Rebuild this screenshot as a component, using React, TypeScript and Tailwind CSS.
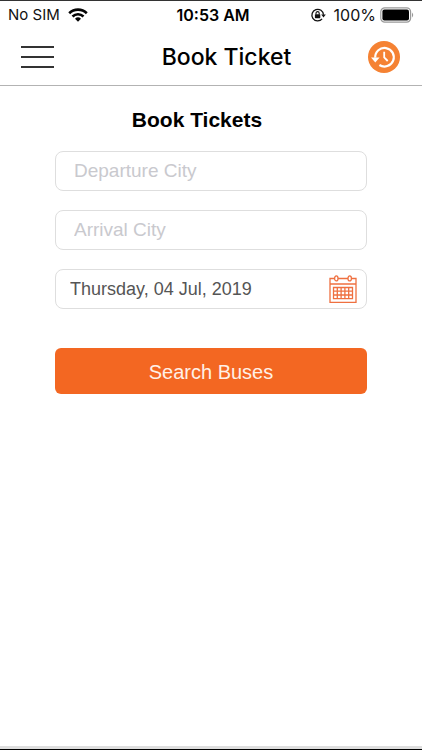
import { useState } from "react";

function StatusBar() {
  return (
    <div className="grid h-7 grid-cols-[1fr_auto_1fr] items-center pr-2 pl-2 font-['Inter',sans-serif] text-base leading-7 text-[#111]">
      <div className="flex items-center gap-2">
        <span className="text-[15px]">No SIM</span>
        <svg className="h-3.5 w-5" viewBox="0 0 20 14" fill="none" stroke="#050505" strokeWidth="2.6" role="img" aria-label="Wi-Fi">
          <path d="M1.2 5.2a12.6 12.6 0 0 1 17.6 0" />
          <path d="M4.5 8.5a8 8 0 0 1 11 0" />
          <path d="M7 10.7a4.3 4.3 0 0 1 6 0L10 13.8Z" fill="#050505" stroke="none" />
        </svg>
      </div>
      <time className="pl-1 font-semibold text-black">10:53 AM</time>
      <div className="flex items-center justify-end gap-1">
        <svg className="mr-1 h-4 w-4" viewBox="0 0 16 16" fill="none" stroke="#111" strokeWidth="1.3" role="img" aria-label="Rotation lock">
          <path d="M12.1 11.9A5.8 5.8 0 1 1 13.5 7.8" />
          <path d="M11.2 7.6h4.6l-2.3 2.8Z" fill="#111" stroke="none" />
          <rect x="4.9" y="7.2" width="5.4" height="4" rx=".6" fill="#111" stroke="none" />
          <path d="M6 7.5V6.2a1.6 1.6 0 0 1 3.2 0v1.3" strokeWidth="1.1" />
        </svg>
        <span>100%</span>
        <svg className="h-4 w-[34px]" viewBox="0 0 34 16" role="img" aria-label="Battery full">
          <rect x=".8" y=".8" width="29.8" height="14.4" rx="4" fill="#fff" stroke="#999" strokeWidth="1.2" />
          <rect x="2.4" y="2.5" width="26.6" height="11" rx="2" fill="#000" />
          <path d="M32 5.5q2.4 2.5 0 5Z" fill="#999" />
        </svg>
      </div>
    </div>
  );
}

function HistoryIcon() {
  return (
    <svg className="h-8 w-8" viewBox="0 0 32 32" fill="none" aria-hidden="true">
      <circle cx="16" cy="16" r="16" fill="#f58233" />
      <path d="M7.2 16.6A9.3 9.3 0 1 1 11.4 24" stroke="#fff" strokeWidth="2.2" />
      <path d="M3 16.4h8.6l-4.3 5Z" fill="#fff" />
      <path d="M16.2 10.8v5.6l3.5 3.6" stroke="#fff" strokeWidth="1.8" />
    </svg>
  );
}

function CalendarIcon() {
  return (
    <svg className="h-7 w-7" viewBox="0 0 28 28" fill="none" stroke="#ef7040" strokeWidth="1.3" aria-hidden="true">
      <path d="M5.5 3.5H1v23.8h26V3.5h-4.5M9 3.5h10M1 9h26" />
      <ellipse cx="7.3" cy="3.4" rx="1.7" ry="2.5" />
      <ellipse cx="20.7" cy="3.4" rx="1.7" ry="2.5" />
      <path d="M4.5 12.5h19v11.2h-19ZM4.5 16.2h19M4.5 20h19M8.3 12.5v11.2M12.1 12.5v11.2M15.9 12.5v11.2M19.7 12.5v11.2" />
    </svg>
  );
}

function CityField({ name, label }: { name: string; label: string }) {
  const [city, setCity] = useState("");
  return (
    <input
      name={name}
      type="text"
      aria-label={label}
      value={city}
      onChange={(e) => setCity(e.target.value)}
      placeholder={label}
      className="block h-10 w-full rounded-lg border border-[#dedede] bg-white px-[18px] text-[19px] text-[#555] placeholder:text-[#c9c9ce]"
    />
  );
}

export default function App() {
  return (
    <div className="flex min-h-screen flex-col border-t border-b border-t-[#333] border-b-black bg-white font-['Liberation_Sans',Arial,sans-serif]">
      <StatusBar />
      <header className="grid h-[57px] grid-cols-[1fr_auto_1fr] items-center border-b border-[#b3b3b3] pr-[22px] pl-[21px]">
        <button type="button" aria-label="Open menu" className="flex w-[33px] flex-col gap-2">
          <span className="h-0.5 w-full bg-[#333]" />
          <span className="h-0.5 w-full bg-[#333]" />
          <span className="h-0.5 w-full bg-[#333]" />
        </button>
        <h1 className="pl-8 font-['Inter',sans-serif] text-[23px] leading-7 font-medium text-black">Book Ticket</h1>
        <button type="button" aria-label="Booking history" className="justify-self-end">
          <HistoryIcon />
        </button>
      </header>
      <main className="flex-1 px-[55px] pt-5">
        <h2 className="pr-7 text-center text-[21px] leading-7 font-bold text-black">Book Tickets</h2>
        <form className="mt-[17px] flex flex-col gap-[19px]" onSubmit={(e) => e.preventDefault()}>
          <CityField name="departure" label="Departure City" />
          <CityField name="arrival" label="Arrival City" />
          <div className="flex h-10 items-center rounded-lg border border-[#dedede] pr-[9px] pl-[14px]">
            <input name="date" type="text" readOnly aria-label="Travel date" value="Thursday, 04 Jul, 2019" className="min-w-0 flex-1 text-[18px] text-[#555]" />
            <button type="button" aria-label="Choose date">
              <CalendarIcon />
            </button>
          </div>
          <button type="submit" className="mt-5 h-[46px] rounded-md bg-[#f36722] pt-0.5 text-[20px] text-[#fff0e6]">Search Buses</button>
        </form>
      </main>
      <footer className="h-[3px] bg-[#dedede]" />
    </div>
  );
}
